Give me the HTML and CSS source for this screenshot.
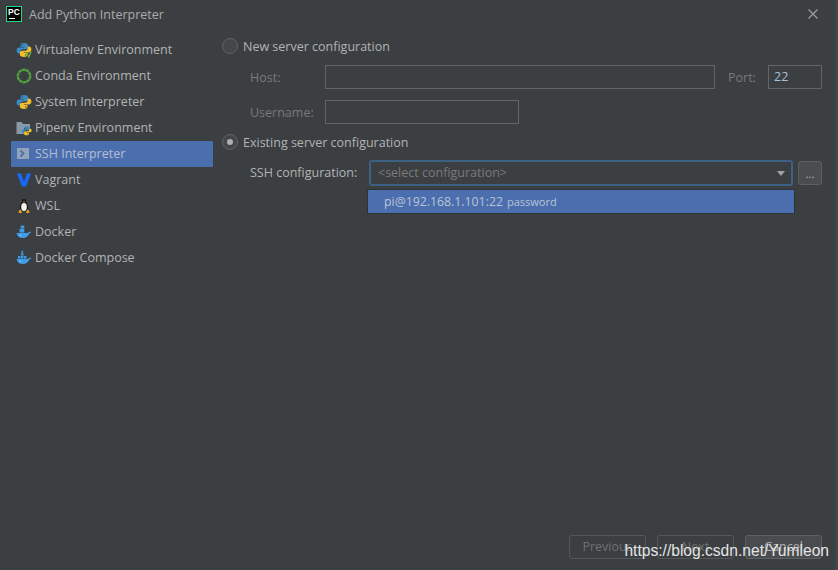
FILE: index.html
```html
<!DOCTYPE html>
<html lang="en">
<head>
<meta charset="utf-8">
<title>Add Python Interpreter</title>
<link rel="stylesheet" href="styles.css">
</head>
<body>
<svg class="defs" width="0" height="0" aria-hidden="true">
  <defs>
    <symbol id="py" viewBox="0 0 16 16">
      <path fill="#3a8bc9" d="M8 1C5.600 1 4.600 1.900 4.600 3.200V5h3.600v.6H3C1.600 5.600.6 6.700.6 8.500c0 1.900 1 3 2.400 3h1.300V9.700c0-1.300 1.100-2.400 2.500-2.400h3.300c1.100 0 2-.9 2-2V3.200C11.700 1.900 10.400 1 8 1z"/>
      <circle cx="6.200" cy="3" r=".7" fill="#3c3f41"/>
      <path fill="#f2c02e" d="M8 15c2.400 0 3.400-.9 3.400-2.200V11H7.800v-.6H13c1.400 0 2.400-1.100 2.400-2.900 0-1.900-1-3-2.400-3h-1.300v1.800c0 1.300-1.100 2.400-2.500 2.400H5.900c-1.100 0-2 .9-2 2v2.100C3.900 14.100 5.600 15 8 15z"/>
      <circle cx="9.800" cy="13" r=".7" fill="#3c3f41"/>
    </symbol>
    <symbol id="whale" viewBox="0 0 16 16">
      <path fill="#3e9ce8" d="M.6 9h11.100c.5-.1.900-.4 1.100-.9.400-.5 1.200-.5 2.500-.2-.5.900-1.100 1.300-2 1.400-.9 2.900-3.200 4.700-6.600 4.700-3.600 0-5.600-1.700-6.100-5z"/>
      <circle cx="4.400" cy="11.200" r=".6" fill="#cfe6fa"/>
    </symbol>
  </defs>
</svg>
<div class="dialog">
  <header class="title-bar">
    <svg class="logo" width="16" height="16" viewBox="0 0 16 16" aria-hidden="true">
      <rect width="16" height="16" fill="#21d789"/>
      <rect x="1" y="1" width="14" height="14" fill="#000"/>
      <rect x="3" y="12" width="6" height="1" fill="#fff"/>
    </svg>
    <span class="logo-text">PC</span>
    <span class="title">Add Python Interpreter</span>
    <svg class="close" width="12" height="12" viewBox="0 0 12 12" aria-hidden="true">
      <path d="M1.500 1.500l9 9M10.500 1.500l-9 9" stroke="#9da0a2" stroke-width="1.200" fill="none"/>
    </svg>
  </header>

  <div class="body">
    <nav class="sidebar">
      <div class="nav-item">
        <svg class="ico" viewBox="0 0 16 16" aria-hidden="true">
          <use href="#py"/>
          <path d="M10.500 10l2.300 5 2.300-5" stroke="#62b543" stroke-width="1.300" fill="none"/>
        </svg>
        <span>Virtualenv Environment</span>
      </div>
      <div class="nav-item">
        <svg class="ico" viewBox="0 0 16 16" aria-hidden="true">
          <circle cx="8" cy="8" r="6.200" fill="none" stroke="#4fa03c" stroke-width="2.400" stroke-dasharray="3.400 .35"/>
        </svg>
        <span>Conda Environment</span>
      </div>
      <div class="nav-item">
        <svg class="ico" viewBox="0 0 16 16" aria-hidden="true"><use href="#py"/></svg>
        <span>System Interpreter</span>
      </div>
      <div class="nav-item">
        <svg class="ico" viewBox="0 0 16 16" aria-hidden="true">
          <path fill="#8a9aa5" d="M.5 2h5l1.500 2h7v4H8v6H.5z"/>
          <svg x="5.500" y="5.500" width="10.500" height="10.500" viewBox="0 0 16 16"><use href="#py"/></svg>
        </svg>
        <span>Pipenv Environment</span>
      </div>
      <div class="nav-item selected">
        <svg class="ico" viewBox="0 0 16 16" aria-hidden="true">
          <rect x="1" y="2" width="12" height="11" fill="#94a4b8"/>
          <path d="M4.500 4.500l3 3-3 3" stroke="#4b6eaf" stroke-width="1.800" fill="none"/>
        </svg>
        <span>SSH Interpreter</span>
      </div>
      <div class="nav-item">
        <svg class="ico" viewBox="0 0 16 16" aria-hidden="true">
          <path fill="#1868f2" d="M.8 1.500h4.400L8 9.400l2.800-7.900h4.400L10 14.500H6z"/>
        </svg>
        <span>Vagrant</span>
      </div>
      <div class="nav-item">
        <svg class="ico" viewBox="0 0 16 16" aria-hidden="true">
          <path fill="#1c1c1c" d="M8 .8c1.600 0 2.300 1.200 2.300 2.700 0 1.500 2.200 3.700 2.200 6.500 0 1.500-1 3-4.500 3s-4.500-1.500-4.500-3c0-2.800 2.200-5 2.200-6.500C5.700 2 6.400.8 8 .8z"/>
          <ellipse cx="8" cy="9" rx="2.800" ry="4" fill="#f2f2f2"/>
          <path fill="#e6a21e" d="M7 3.500h2L8 4.800zM2.200 14.200l2-3 2 3-2 1zM13.800 14.200l-2-3-2 3 2 1z"/>
        </svg>
        <span>WSL</span>
      </div>
      <div class="nav-item">
        <svg class="ico" viewBox="0 0 16 16" aria-hidden="true">
          <use href="#whale"/>
          <rect x="3.500" y="4.800" width="4.800" height="3.700" fill="#3e9ce8"/>
          <rect x="4.800" y="1.600" width="3.500" height="2.800" fill="#3e9ce8"/>
        </svg>
        <span>Docker</span>
      </div>
      <div class="nav-item">
        <svg class="ico" viewBox="0 0 16 16" aria-hidden="true">
          <use href="#whale"/>
          <path fill="#3e9ce8" d="M2 6h2.500v2.500H2zM5 6h2.500v2.500H5zM8 6h2.500v2.500H8zM5 3.200h2.500v2.400H5zM5.400.8h1.700v2H5.400z"/>
        </svg>
        <span>Docker Compose</span>
      </div>
    </nav>

    <main class="main">
      <div class="form">
        <label class="radio-row">
          <span class="radio"></span>
          <span>New server configuration</span>
        </label>
        <div class="field-row">
          <span class="lbl dim lbl-host">Host:</span>
          <div class="input grow"></div>
          <span class="lbl dim lbl-port">Port:</span>
          <div class="input port">22</div>
        </div>
        <div class="field-row">
          <span class="lbl dim lbl-host">Username:</span>
          <div class="input user"></div>
        </div>
        <label class="radio-row existing">
          <span class="radio on"></span>
          <span>Existing server configuration</span>
        </label>
        <div class="ssh-row">
          <span class="lbl lbl-ssh">SSH configuration:</span>
          <div class="combo">
            <span class="placeholder">&lt;select configuration&gt;</span>
            <span class="arrow"></span>
            <div class="popup">
              <span class="popup-host">pi@192.168.1.101:22</span>
              <span class="popup-auth">password</span>
            </div>
          </div>
          <div class="more">...</div>
        </div>
      </div>
      <footer class="footer">
        <div class="btn off">Previous</div>
        <div class="btn off">Next</div>
        <div class="btn cancel">Cancel</div>
      </footer>
    </main>
  </div>
</div>
<div class="watermark">https://blog.csdn.net/Yumleon</div>
</body>
</html>
```
FILE: styles.css
```css
* { box-sizing: border-box; }
html, body { margin: 0; height: 100%; }
body {
  width: 838px;
  height: 570px;
  background: #3c3f41;
  color: #bbbbbb;
  font-family: "Open Sans", "Noto Sans", sans-serif;
  font-size: 12.5px;
  overflow: hidden;
  position: relative;
}
.defs { position: absolute; }
.dialog { display: flex; flex-direction: column; height: 570px; border-right: 2px solid #45484a; }
.title-bar {
  height: 36px;
  flex: none;
  display: flex;
  align-items: flex-start;
  padding: 6px 0 0 6px;
  position: relative;
}
.logo { flex: none; }
.logo-text {
  position: absolute;
  left: 8px;
  top: 6px;
  color: #fff;
  font: bold 8.500px/13px "Liberation Sans", sans-serif;
}
.title { margin-left: 7px; line-height: 18px; color: #a9abad; }
.close { position: absolute; right: 17px; top: 8px; }
.body { flex: 1; display: flex; min-height: 0; }
.sidebar { width: 213px; flex: none; padding: 1px 0 0 11px; }
.nav-item {
  height: 26px;
  display: flex;
  align-items: center;
  padding-left: 5px;
  gap: 3px;
  color: #b1b3b5;
  white-space: nowrap;
}
.nav-item span { margin-bottom: 2px; }
.nav-item.selected { background: #4b6eaf; color: #b5bfd0; }
.ico { width: 16px; height: 16px; flex: none; margin-bottom: 1px; }
.main { flex: 1; display: flex; flex-direction: column; min-width: 0; padding: 0 14px 0 9px; }
.form { flex: 1; }
.radio-row { display: flex; align-items: center; height: 20px; gap: 5px; color: #b1b3b5; }
.radio {
  width: 16px;
  height: 16px;
  border-radius: 50%;
  border: 1px solid #606364;
  background: #43474a;
  flex: none;
  position: relative;
}
.radio.on::after {
  content: "";
  position: absolute;
  left: 4px;
  top: 4px;
  width: 6px;
  height: 6px;
  border-radius: 50%;
  background: #aeb0b2;
}
.field-row { display: flex; align-items: center; height: 24px; margin-top: 9px; padding-left: 28px; }
.field-row + .field-row { margin-top: 11px; }
.lbl { white-space: nowrap; }
.dim { color: #77797b; }
.lbl-host { width: 75px; flex: none; }
.lbl-port { width: 40px; margin-left: 13px; flex: none; }
.input { height: 24px; border: 1px solid #646464; background: #3c3f41; }
.grow { flex: 1; }
.port { width: 54px; flex: none; padding-left: 5px; line-height: 22px; color: #a8c0dc; }
.user { width: 194px; }
.existing { margin-top: 8px; }
.ssh-row { display: flex; align-items: center; margin-top: 8px; padding-left: 28px; height: 26px; }
.lbl-ssh { width: 119px; flex: none; color: #b1b3b5; margin-bottom: 2px; }
.combo {
  width: 424px;
  height: 26px;
  flex: none;
  border: 2px solid #3d6185;
  border-radius: 3px;
  position: relative;
  display: flex;
  align-items: center;
  padding-left: 7px;
}
.placeholder { color: #787a7c; margin-bottom: 2px; }
.arrow {
  position: absolute;
  right: 6px;
  top: 9px;
  width: 0;
  height: 0;
  border-left: 4.500px solid transparent;
  border-right: 4.500px solid transparent;
  border-top: 5px solid #a0a2a4;
}
.popup {
  position: absolute;
  left: -4px;
  top: 27px;
  width: 428px;
  height: 25px;
  background: #4b6eaf;
  border: 1px solid #2f3133;
  padding-left: 16px;
  display: flex;
  align-items: center;
  gap: 4px;
  color: #bbc4d3;
  font-size: 12.300px;
  white-space: nowrap;
}
.popup-auth { font-size: 11px; }
.more {
  width: 24px;
  height: 24px;
  flex: none;
  margin-left: 5px;
  background: #4a4d4f;
  border: 1px solid #5d6062;
  border-radius: 3px;
  text-align: center;
  line-height: 24px;
  font-size: 11px;
}
.footer { flex: none; display: flex; justify-content: flex-end; gap: 11px; height: 35px; }
.btn {
  width: 77px;
  height: 24px;
  border: 1px solid #55585a;
  border-radius: 3px;
  text-align: center;
  line-height: 22px;
  color: #6f7274;
}
.cancel { background: #494c4e; border-color: #5d6062; color: #b1b3b5; }
.watermark {
  position: absolute;
  right: 9px;
  top: 541px;
  font: 15.600px/20px "Liberation Sans", sans-serif;
  color: #e4e4e4;
  white-space: nowrap;
}
```
